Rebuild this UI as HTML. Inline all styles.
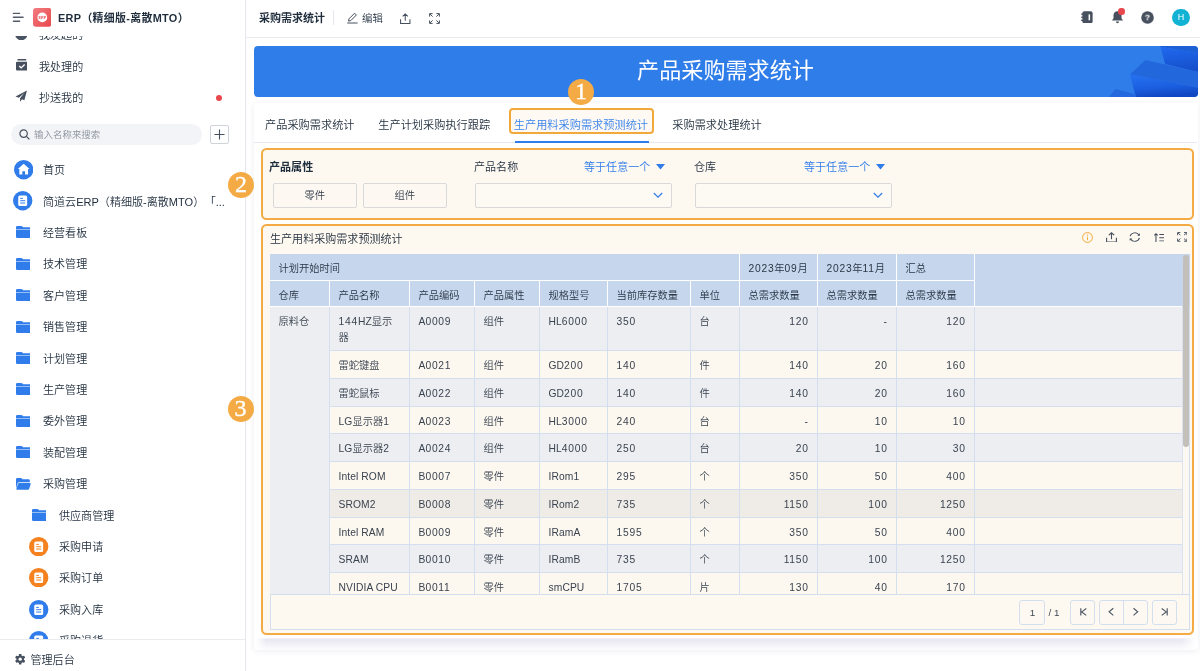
<!DOCTYPE html>
<html lang="zh-CN">
<head>
<meta charset="utf-8">
<title>采购需求统计</title>
<style>
*{box-sizing:border-box;margin:0;padding:0}
html,body{width:1200px;height:671px;overflow:hidden;background:#fff}
body{font-family:"Liberation Sans","Noto Sans CJK SC",sans-serif;color:#1f2d3d;font-size:12px;position:relative;font-weight:350}
.abs{position:absolute}
#wrap{position:absolute;left:0;top:0;width:1200px;height:671px;will-change:transform}
#side{position:absolute;left:0;top:0;width:246px;height:671px;background:#fff;border-right:1px solid #e4e7ed;overflow:hidden}
#side .hd{position:absolute;left:0;top:0;width:244px;height:36px;background:#fff;z-index:3}
#side .ttl{position:absolute;left:58px;top:8px;letter-spacing:.33px;font-size:10.9px;font-weight:700;line-height:20px;color:#1f2d3d;white-space:nowrap}
.it{position:absolute;left:0;width:244px;height:24px;line-height:24px;font-size:11.06px;color:#1f2d3d;white-space:nowrap}
.it span{position:absolute;left:43px;top:0}
.it.sub span{left:59px}
.it svg{position:absolute}
#side .ft{position:absolute;left:0;top:639px;width:245px;height:32px;background:#fff;border-top:1px solid #e9ebef;z-index:3}
#top{position:absolute;left:246px;top:0;width:954px;height:38px;background:#fff;border-bottom:1px solid #e9ebef}
#banner{position:absolute;left:254px;top:45.5px;width:944px;height:51.2px;background:#2f7de9;border-radius:4px;overflow:hidden}
#banner .t{position:absolute;left:0;top:0;width:943px;text-align:center;color:#fff;font-weight:400;font-size:22.1px;line-height:49px;letter-spacing:0}
#panel{position:absolute;left:254px;top:103px;width:944px;height:547px;background:#fff;box-shadow:0 1px 6px rgba(70,70,130,.09);border-radius:3px}
#tabs{position:absolute;left:254px;top:103px;width:943px;height:40px;border-bottom:1px solid #e6e9ef}
.tab{position:absolute;top:0;height:40px;line-height:44px;font-size:11.2px;color:#1f2d3d;white-space:nowrap}
.obox{position:absolute;border:2.900px solid #f4ab43;border-radius:5.500px;background:#fdf8f0}
.badge{position:absolute;width:26px;height:26px;border-radius:50%;background:#f4ab46;color:#fff;font-family:"Liberation Serif",serif;font-weight:400;font-size:24px;line-height:25px;text-align:center;-webkit-text-stroke:.35px #fff}
#tbl{position:absolute;left:270px;top:254px;width:912px;height:340px;overflow:hidden;background:#fdf9f1}
.c{position:absolute;font-size:10.27px;color:#3a4350;border-right:1px solid #d3deee;border-bottom:1px solid #d3deee;padding:0 0 0 8.500px;white-space:nowrap;overflow:hidden}
.h{background:#c6d6ec;border-right:1px solid #fff;border-bottom:1px solid #fff;color:#2a3646}
.n{text-align:right;padding:0 9px 0 0}
.c i{font-style:normal;letter-spacing:.75px}
.c em{font-style:normal;letter-spacing:.1px}
.n i{margin-right:-.75px}
.lbl{position:absolute;font-size:11.06px;line-height:16px;white-space:nowrap}
.btn{position:absolute;height:25px;border:1px solid #d9d9da;border-radius:2px;background:#fdf9f2;text-align:center;line-height:23px;font-size:10.3px;color:#333d4a}
.sel{position:absolute;height:25px;border:1px solid #d9d9da;border-radius:2px;background:#fdf9f3}
.pg{position:absolute;height:25px;border:1px solid #d3deee;border-radius:3px;background:#fdf9f2;top:599.5px}
</style>
</head>
<body>
<div id="wrap">
<div id="side">
<svg class="abs" style="left:15.300px;top:27.600px" width="12.600" height="12.600" viewBox="0 0 13 13"><circle cx="6.500" cy="6.500" r="6.300" fill="#4a5361"/></svg>
<div class="it" style="top:23.400px"><span style="left:39px">我发起的</span></div>
<div class="hd"></div>
<svg class="abs" style="left:12px;top:12px;z-index:4" width="13" height="11" viewBox="0 0 13 11"><path d="M1.400 1.400h6.200M1.400 5.200h9.700M1.400 9.200h6.200" stroke="#535c6a" stroke-width="1.400" stroke-linecap="round" fill="none"/></svg>
<svg class="abs" style="left:32.500px;top:8.300px;z-index:4" width="18.600" height="18.800" viewBox="0 0 19 19"><defs><linearGradient id="lg" x1="0" y1="0" x2="1" y2="1"><stop offset="0" stop-color="#f27c80"/><stop offset="1" stop-color="#e9474c"/></linearGradient></defs><rect width="19" height="19" rx="3" fill="url(#lg)"/><circle cx="9.500" cy="9.500" r="5" fill="#fff"/><text x="9.500" y="10.900" text-anchor="middle" font-family="Liberation Sans,sans-serif" font-weight="700" font-size="3.800" fill="#ec5257">ERP</text></svg>
<div class="ttl" style="z-index:4">ERP（精细版-离散MTO）</div>
<svg class="abs" style="left:15.600px;top:59.300px" width="11.800" height="12" viewBox="0 0 13 13"><rect x="1.6" y="0" width="9.8" height="1.5" rx=".6" fill="#47505e"/><path d="M1.2 2.8h10.6q1.2 0 1.2 1.2v7.4q0 1.2-1.2 1.2H1.2Q0 12.6 0 11.400V4q0-1.200 1.200-1.200z" fill="#47505e"/><path d="M3.6 7.6l2.100 2.100 3.800-3.800" stroke="#fff" stroke-width="1.5" fill="none"/></svg>
<div class="it" style="top:55px"><span style="left:39px">我处理的</span></div>
<svg class="abs" style="left:15.300px;top:90px" width="12.400" height="12.600" viewBox="0 0 14 14"><path d="M13.500.4L.6 7.200l3.700 1.400 6.200-5.400-4.800 6.100v3.900l2.300-2.800 2.600 1z" fill="#47505e"/></svg>
<div class="it" style="top:86.200px"><span style="left:39px">抄送我的</span></div>
<div class="abs" style="left:216px;top:95px;width:6px;height:6px;border-radius:50%;background:#e8474d"></div>
<div class="abs" style="left:11px;top:124px;width:191px;height:21px;border-radius:11px;background:#f3f4f7"></div>
<svg class="abs" style="left:19px;top:129px" width="11" height="11" viewBox="0 0 11 11"><circle cx="4.600" cy="4.600" r="3.700" stroke="#47505e" stroke-width="1.200" fill="none"/><path d="M7.400 7.400l3 3" stroke="#47505e" stroke-width="1.300"/></svg>
<div class="abs" style="left:34px;top:125px;font-size:9.48px;line-height:20px;color:#8a919c;white-space:nowrap">输入名称来搜索</div>
<div class="abs" style="left:210px;top:125px;width:19px;height:19px;border:1px solid #cfd3da;border-radius:2px;background:#fff"></div>
<svg class="abs" style="left:214px;top:129px" width="11" height="11" viewBox="0 0 11 11"><path d="M5.500.5v10M.5 5.500h10" stroke="#47505e" stroke-width="1.100"/></svg>
<svg class="abs" style="left:13.500px;top:160.300px" width="19.400" height="19.400" viewBox="0 0 20 20"><circle cx="10" cy="10" r="10" fill="#2f7cea"/><path d="M10 3.800l6 5.400h-1.500v5.800h-3.100v-3.400h-2.800v3.400H5.500V9.200H4z" fill="#fff"/></svg>
<div class="it" style="top:158px"><span>首页</span></div>
<svg class="abs" style="left:13.3px;top:191.3px" width="19.4" height="19.4" viewBox="0 0 20 20"><circle cx="10" cy="10" r="10" fill="#2f7cea"/><rect x="5.400" y="4.600" width="9.200" height="10.800" rx="1.600" fill="#fff"/><rect x="7.400" y="7.100" width="2.800" height="1" fill="#2f7cea"/><rect x="7.400" y="9.500" width="5.200" height="1" fill="#2f7cea"/><rect x="7.400" y="11.900" width="5.200" height="1" fill="#2f7cea"/></svg>
<div class="it" style="top:189.700px"><span>简道云ERP（精细版-离散MTO）<b style="font-weight:400;margin-left:6px">「...</b></span></div>
<svg class="abs" style="left:15.7px;top:226.4px" width="14.8" height="12" viewBox="0 0 14.8 12"><path d="M0 1.300Q0 0 1.300 0h4q.7 0 1.100.5l.7.800h6.400q1.300 0 1.300 1.300v.9H0z" fill="#2f7cea"/><path d="M0 4.100h14.800v6.600q0 1.300-1.300 1.300H1.300Q0 12 0 10.700z" fill="#2f7cea"/></svg>
<div class="it" style="top:221.0px"><span>经营看板</span></div>
<svg class="abs" style="left:15.7px;top:257.8px" width="14.8" height="12" viewBox="0 0 14.8 12"><path d="M0 1.300Q0 0 1.300 0h4q.7 0 1.100.5l.7.800h6.400q1.300 0 1.300 1.300v.9H0z" fill="#2f7cea"/><path d="M0 4.100h14.800v6.600q0 1.300-1.300 1.300H1.300Q0 12 0 10.700z" fill="#2f7cea"/></svg>
<div class="it" style="top:252.4px"><span>技术管理</span></div>
<svg class="abs" style="left:15.7px;top:289.2px" width="14.8" height="12" viewBox="0 0 14.8 12"><path d="M0 1.300Q0 0 1.300 0h4q.7 0 1.100.5l.7.800h6.400q1.300 0 1.300 1.300v.9H0z" fill="#2f7cea"/><path d="M0 4.100h14.800v6.600q0 1.300-1.300 1.300H1.300Q0 12 0 10.700z" fill="#2f7cea"/></svg>
<div class="it" style="top:283.8px"><span>客户管理</span></div>
<svg class="abs" style="left:15.7px;top:320.6px" width="14.8" height="12" viewBox="0 0 14.8 12"><path d="M0 1.300Q0 0 1.300 0h4q.7 0 1.100.5l.7.800h6.400q1.300 0 1.300 1.300v.9H0z" fill="#2f7cea"/><path d="M0 4.100h14.800v6.600q0 1.300-1.300 1.300H1.300Q0 12 0 10.700z" fill="#2f7cea"/></svg>
<div class="it" style="top:315.2px"><span>销售管理</span></div>
<svg class="abs" style="left:15.7px;top:352.0px" width="14.8" height="12" viewBox="0 0 14.8 12"><path d="M0 1.300Q0 0 1.300 0h4q.7 0 1.100.5l.7.800h6.400q1.300 0 1.300 1.300v.9H0z" fill="#2f7cea"/><path d="M0 4.100h14.800v6.600q0 1.300-1.300 1.300H1.300Q0 12 0 10.700z" fill="#2f7cea"/></svg>
<div class="it" style="top:346.6px"><span>计划管理</span></div>
<svg class="abs" style="left:15.7px;top:383.4px" width="14.8" height="12" viewBox="0 0 14.8 12"><path d="M0 1.300Q0 0 1.300 0h4q.7 0 1.100.5l.7.800h6.400q1.300 0 1.300 1.300v.9H0z" fill="#2f7cea"/><path d="M0 4.100h14.800v6.600q0 1.300-1.300 1.300H1.300Q0 12 0 10.700z" fill="#2f7cea"/></svg>
<div class="it" style="top:378.0px"><span>生产管理</span></div>
<svg class="abs" style="left:15.7px;top:414.8px" width="14.8" height="12" viewBox="0 0 14.8 12"><path d="M0 1.300Q0 0 1.300 0h4q.7 0 1.100.5l.7.800h6.400q1.300 0 1.300 1.300v.9H0z" fill="#2f7cea"/><path d="M0 4.100h14.800v6.600q0 1.300-1.300 1.300H1.300Q0 12 0 10.700z" fill="#2f7cea"/></svg>
<div class="it" style="top:409.4px"><span>委外管理</span></div>
<svg class="abs" style="left:15.7px;top:446.2px" width="14.8" height="12" viewBox="0 0 14.8 12"><path d="M0 1.300Q0 0 1.300 0h4q.7 0 1.100.5l.7.800h6.400q1.300 0 1.300 1.300v.9H0z" fill="#2f7cea"/><path d="M0 4.100h14.800v6.600q0 1.300-1.300 1.300H1.300Q0 12 0 10.700z" fill="#2f7cea"/></svg>
<div class="it" style="top:440.8px"><span>装配管理</span></div>
<svg class="abs" style="left:15.8px;top:477.8px" width="14.900" height="11.800" viewBox="0 0 14.900 11.800"><path d="M0 1.300Q0 0 1.300 0h3.600q.6 0 1 .5l.7.800h6q1.200 0 1.200 1.200v1.700H3q-1 0-1.300 1L0 10.200z" fill="#2f7cea"/><path d="M3.300 4.900h10.700q1 0 .7 1l-1.500 4.900q-.3 1-1.300 1H1.100q-1 0-.7-1l1.600-4.900q.3-1 1.300-1z" fill="#2f7cea"/></svg>
<div class="it" style="top:472.2px"><span>采购管理</span></div>
<svg class="abs" style="left:31.7px;top:509px" width="14.8" height="12" viewBox="0 0 14.8 12"><path d="M0 1.300Q0 0 1.300 0h4q.7 0 1.100.5l.7.800h6.400q1.300 0 1.300 1.300v.9H0z" fill="#2f7cea"/><path d="M0 4.100h14.800v6.600q0 1.300-1.300 1.300H1.300Q0 12 0 10.700z" fill="#2f7cea"/></svg>
<div class="it sub" style="top:503.6px"><span>供应商管理</span></div>
<svg class="abs" style="left:29.3px;top:536.6999999999999px" width="19.4" height="19.4" viewBox="0 0 20 20"><circle cx="10" cy="10" r="10" fill="#f5821f"/><rect x="5.400" y="4.600" width="9.200" height="10.800" rx="1.600" fill="#fff"/><rect x="7.400" y="7.100" width="2.800" height="1" fill="#f5821f"/><rect x="7.400" y="9.500" width="5.200" height="1" fill="#f5821f"/><rect x="7.400" y="11.900" width="5.200" height="1" fill="#f5821f"/></svg>
<div class="it sub" style="top:535.0px"><span>采购申请</span></div>
<svg class="abs" style="left:29.3px;top:568.0999999999999px" width="19.4" height="19.4" viewBox="0 0 20 20"><circle cx="10" cy="10" r="10" fill="#f5821f"/><rect x="5.400" y="4.600" width="9.200" height="10.800" rx="1.600" fill="#fff"/><rect x="7.400" y="7.100" width="2.800" height="1" fill="#f5821f"/><rect x="7.400" y="9.500" width="5.200" height="1" fill="#f5821f"/><rect x="7.400" y="11.900" width="5.200" height="1" fill="#f5821f"/></svg>
<div class="it sub" style="top:566.4px"><span>采购订单</span></div>
<svg class="abs" style="left:29.3px;top:599.5px" width="19.4" height="19.4" viewBox="0 0 20 20"><circle cx="10" cy="10" r="10" fill="#2f7cea"/><rect x="5.400" y="4.600" width="9.200" height="10.800" rx="1.600" fill="#fff"/><rect x="7.400" y="7.100" width="2.800" height="1" fill="#2f7cea"/><rect x="7.400" y="9.500" width="5.200" height="1" fill="#2f7cea"/><rect x="7.400" y="11.900" width="5.200" height="1" fill="#2f7cea"/></svg>
<div class="it sub" style="top:597.8px"><span>采购入库</span></div>
<svg class="abs" style="left:29.3px;top:630.9px" width="19.4" height="19.4" viewBox="0 0 20 20"><circle cx="10" cy="10" r="10" fill="#2f7cea"/><rect x="5.400" y="4.600" width="9.200" height="10.800" rx="1.600" fill="#fff"/><rect x="7.400" y="7.100" width="2.800" height="1" fill="#2f7cea"/><rect x="7.400" y="9.500" width="5.200" height="1" fill="#2f7cea"/><rect x="7.400" y="11.900" width="5.200" height="1" fill="#2f7cea"/></svg>
<div class="it sub" style="top:629.2px"><span>采购退货</span></div>
<div class="ft"></div>
<svg class="abs" style="left:15px;top:654.300px;z-index:4" width="10.400" height="10.400" viewBox="-6 -6 12 12"><g fill="#47505e"><circle r="4.300"/><rect x="-1.500" y="-6" width="3" height="12" rx=".6"/><rect x="-1.500" y="-6" width="3" height="12" rx=".6" transform="rotate(60)"/><rect x="-1.500" y="-6" width="3" height="12" rx=".6" transform="rotate(120)"/></g><circle r="1.900" fill="#fff"/></svg>
<div class="abs" style="left:30.500px;top:649px;font-size:11.06px;line-height:22px;z-index:4;color:#1f2d3d;white-space:nowrap">管理后台</div>
</div>
<div id="top">
<div class="abs" style="left:13px;top:8px;font-size:11px;font-weight:700;line-height:20px;white-space:nowrap;color:#1f2d3d">采购需求统计</div>
<div class="abs" style="left:86.5px;top:10px;width:1px;height:15px;background:#e4e7ed"></div>
<svg class="abs" style="left:101px;top:12px" width="11" height="12" viewBox="0 0 11 12"><path d="M7.600 1.200l1.800 1.800-5.600 5.600-2.300.5.500-2.300z" stroke="#47505e" stroke-width="1" fill="none" stroke-linejoin="round"/><path d="M.2 11h10.400" stroke="#47505e" stroke-width="1"/></svg>
<div class="abs" style="left:116px;top:8.5px;font-size:10.4px;line-height:20px;white-space:nowrap;color:#1f2d3d">编辑</div>
<svg class="abs" style="left:154px;top:12.5px" width="10.5" height="11.5" viewBox="0 0 11 12"><path d="M5.500 8V1M2.800 3.500L5.500.9l2.700 2.600M.6 6.500V11h9.800V6.500" stroke="#47505e" stroke-width="1.100" fill="none"/></svg>
<svg class="abs" style="left:183px;top:13px" width="11" height="11" viewBox="0 0 11 11"><path d="M.6 3.600V.6h3M7.400.6h3v3M10.400 7.400v3h-3M3.600 10.400h-3v-3M1 1l2.600 2.600M10 1L7.400 3.600M10 10L7.400 7.400M1 10l2.600-2.600" stroke="#47505e" stroke-width="1" fill="none"/></svg>
<svg class="abs" style="left:834.600px;top:10.600px" width="12" height="12.600" viewBox="0 0 12 13"><rect x="1.200" y=".3" width="10.600" height="12.400" rx="2" fill="#47505e"/><rect x="0" y="2.600" width="2.400" height="1.300" fill="#47505e"/><rect x="0" y="5.800" width="2.400" height="1.300" fill="#47505e"/><rect x="0" y="9" width="2.400" height="1.300" fill="#47505e"/><rect x="7.600" y="3.400" width="1.600" height="6.200" rx=".4" fill="#fff"/></svg>
<svg class="abs" style="left:865px;top:9.500px" width="13" height="14" viewBox="0 0 13 14"><path d="M6.500 1.200c2.600 0 4 1.900 4 4.300v2.800l1.500 2.200H1l1.500-2.200V5.500c0-2.400 1.400-4.300 4-4.300z" fill="#47505e"/><path d="M5 11.600h3c0 1-.7 1.700-1.500 1.700S5 12.600 5 11.600z" fill="#47505e"/></svg>
<div class="abs" style="left:872.400px;top:8.200px;width:6.500px;height:6.500px;border-radius:50%;background:#e8474d"></div>
<svg class="abs" style="left:895.200px;top:10.500px" width="13" height="13" viewBox="0 0 14 14"><circle cx="7" cy="7" r="6.800" fill="#47505e"/><text x="7" y="10.400" text-anchor="middle" font-family="Liberation Sans,sans-serif" font-weight="700" font-size="9.500" fill="#fff">?</text></svg>
<div class="abs" style="left:926.300px;top:8.600px;width:17.400px;height:17.400px;border-radius:50%;background:#11b2d3;color:#fff;font-size:9px;line-height:17.400px;text-align:center">H</div>
</div>
<div id="banner"><div class="t">产品采购需求统计</div><svg class="abs" style="left:826px;top:-5.5px" width="120" height="64" viewBox="0 0 1200 640"><defs><linearGradient id="b1" x1="0" y1="0" x2="0.15" y2="1"><stop offset="0" stop-color="#2069ee"/><stop offset="1" stop-color="#154fcb"/></linearGradient><linearGradient id="b2" x1="0" y1="0" x2="0.25" y2="1"><stop offset="0" stop-color="#2672f2"/><stop offset=".6" stop-color="#1b5fe0"/><stop offset="1" stop-color="#1047c2"/></linearGradient></defs><polygon points="805,55 1200,55 1200,135 805,68" fill="#1d5fd4"/><polygon points="805,68 1200,135 1200,325 852,240" fill="url(#b1)"/><polygon points="655,200 1200,325 1200,480 500,345" fill="#2367dc"/><polygon points="500,345 1200,480 1200,580 560,580" fill="url(#b2)"/><polygon points="355,490 560,545 560,580 280,580" fill="#2569de"/></svg></div>
<div id="panel"></div>
<div class="abs" style="left:509px;top:108px;width:145px;height:26px;border:2px solid #f2a93b;border-radius:4px;background:#fef9f3"></div>
<div id="tabs"><div class="tab" style="left:11px;color:#1f2d3d">产品采购需求统计</div><div class="tab" style="left:124.3px;color:#1f2d3d">生产计划采购执行跟踪</div><div class="tab" style="left:259.8px;color:#3a83ec">生产用料采购需求预测统计</div><div class="tab" style="left:418.3px;color:#1f2d3d">采购需求处理统计</div><div class="abs" style="left:260.700px;top:37.500px;width:134.300px;height:2px;background:#2f7cea"></div></div>
<div class="badge" style="left:568px;top:79px">1</div>
<div class="obox" style="left:261px;top:148px;width:933px;height:72px"></div>
<div class="badge" style="left:228px;top:171.500px">2</div>
<div class="lbl" style="left:269px;top:159px;font-weight:700">产品属性</div>
<div class="btn" style="left:273px;top:182.500px;width:83.500px">零件</div>
<div class="btn" style="left:363px;top:182.500px;width:83.500px">组件</div>
<div class="lbl" style="left:474px;top:159px">产品名称</div>
<div class="lbl" style="left:584px;top:159px;color:#2f7cea">等于任意一个</div>
<svg class="abs" style="left:656px;top:164px" width="9" height="6" viewBox="0 0 9 6"><path d="M0 0h9L4.500 5.600z" fill="#2f7cea"/></svg>
<div class="sel" style="left:474.500px;top:183px;width:197px"></div>
<svg class="abs" style="left:653px;top:192px" width="10" height="7" viewBox="0 0 10 7"><path d="M.8 1l4.200 4.200L9.200 1" stroke="#2f7cea" stroke-width="1.200" fill="none"/></svg>
<div class="lbl" style="left:694px;top:159px">仓库</div>
<div class="lbl" style="left:804px;top:159px;color:#2f7cea">等于任意一个</div>
<svg class="abs" style="left:876px;top:164px" width="9" height="6" viewBox="0 0 9 6"><path d="M0 0h9L4.500 5.600z" fill="#2f7cea"/></svg>
<div class="sel" style="left:694.500px;top:183px;width:197px"></div>
<svg class="abs" style="left:873px;top:192px" width="10" height="7" viewBox="0 0 10 7"><path d="M.8 1l4.200 4.200L9.200 1" stroke="#2f7cea" stroke-width="1.200" fill="none"/></svg>
<div class="abs" style="left:256px;top:637.500px;width:940px;height:13px;background:linear-gradient(to bottom,rgba(105,95,170,.17),rgba(105,95,170,.05) 70%,rgba(105,95,170,0));filter:blur(1.200px);-webkit-mask-image:linear-gradient(to right,transparent,#000 10px,#000 926px,transparent)"></div>
<div class="obox" style="left:261px;top:224px;width:933.200px;height:411px"></div>
<div class="badge" style="left:227.500px;top:396px">3</div>
<div class="lbl" style="left:270px;top:231px;font-size:11.06px">生产用料采购需求预测统计</div>
<svg class="abs" style="left:1082px;top:232px" width="11" height="11" viewBox="0 0 11 11"><circle cx="5.500" cy="5.500" r="4.900" stroke="#f2a93b" stroke-width="1" fill="none"/><path d="M5.500 4.800v3.400" stroke="#f2a93b" stroke-width="1"/><circle cx="5.500" cy="3.200" r=".65" fill="#f2a93b"/></svg>
<svg class="abs" style="left:1106px;top:231.700px" width="11" height="10.800" viewBox="0 0 11 12" preserveAspectRatio="none"><path d="M5.500 8V1M2.800 3.500L5.500.9l2.700 2.600M.6 6.500V11h9.800V6.500" stroke="#47505e" stroke-width="1.100" fill="none"/></svg>
<svg class="abs" style="left:1129.200px;top:232px" width="11.600" height="10.200" viewBox="0 0 12 12" preserveAspectRatio="none"><path d="M1.200 5A4.900 4.900 0 0 1 10.400 3.700M10.800 7A4.900 4.900 0 0 1 1.600 8.300" stroke="#47505e" stroke-width="1.100" fill="none"/><path d="M11.300 1.600v2.800H8.500zM.7 10.400V7.600h2.800z" fill="#47505e"/></svg>
<svg class="abs" style="left:1153.500px;top:232.600px" width="10.800" height="9.400" viewBox="0 0 11 11" preserveAspectRatio="none"><path d="M2 10.500V.8M.2 2.800L2 .8l1.800 2M5.400 1.800h5.400M5.400 5.500h5.400M5.400 9.200h5.400" stroke="#47505e" stroke-width="1.100" fill="none"/></svg>
<svg class="abs" style="left:1176.800px;top:232.200px" width="10.400" height="9.800" viewBox="0 0 11 11" preserveAspectRatio="none"><path d="M.6 3.600V.6h3M7.400.6h3v3M10.400 7.400v3h-3M3.600 10.400h-3v-3M1 1l2.600 2.600M10 1L7.400 3.600M10 10L7.400 7.400M1 10l2.600-2.600" stroke="#47505e" stroke-width="1" fill="none"/></svg>
<div id="tbl"><div class="c h" style="left:0px;top:0px;width:470px;height:27px;line-height:30px">计划开始时间</div><div class="c h" style="left:470px;top:0px;width:78px;height:27px;line-height:30px"><i>2023</i>年<i>09</i>月</div><div class="c h" style="left:548px;top:0px;width:79px;height:27px;line-height:30px"><i>2023</i>年<i>11</i>月</div><div class="c h" style="left:627px;top:0px;width:78px;height:27px;line-height:30px">汇总</div><div class="c h" style="left:705px;top:0px;width:207px;height:53px;border-right:none"></div><div class="c h" style="left:0px;top:27px;width:60px;height:26px;line-height:29px">仓库</div><div class="c h" style="left:60px;top:27px;width:80px;height:26px;line-height:29px">产品名称</div><div class="c h" style="left:140px;top:27px;width:65px;height:26px;line-height:29px">产品编码</div><div class="c h" style="left:205px;top:27px;width:65px;height:26px;line-height:29px">产品属性</div><div class="c h" style="left:270px;top:27px;width:68px;height:26px;line-height:29px">规格型号</div><div class="c h" style="left:338px;top:27px;width:83px;height:26px;line-height:29px">当前库存数量</div><div class="c h" style="left:421px;top:27px;width:49px;height:26px;line-height:29px">单位</div><div class="c h" style="left:470px;top:27px;width:78px;height:26px;line-height:29px">总需求数量</div><div class="c h" style="left:548px;top:27px;width:79px;height:26px;line-height:29px">总需求数量</div><div class="c h" style="left:627px;top:27px;width:78px;height:26px;line-height:29px">总需求数量</div><div class="c " style="left:0px;top:53px;width:60px;height:347px;background:#eceef1;line-height:16px;padding-top:7px">原料仓</div><div class="c " style="left:60px;top:53px;width:80px;height:44px;background:#eceef1;line-height:16px;padding-top:7px"><i>144</i><em>HZ</em>显示<br>器</div><div class="c " style="left:140px;top:53px;width:65px;height:44px;background:#eceef1;line-height:16px;padding-top:7px"><em>A</em><i>0009</i></div><div class="c " style="left:205px;top:53px;width:65px;height:44px;background:#eceef1;line-height:16px;padding-top:7px">组件</div><div class="c " style="left:270px;top:53px;width:68px;height:44px;background:#eceef1;line-height:16px;padding-top:7px"><em>HL</em><i>6000</i></div><div class="c " style="left:338px;top:53px;width:83px;height:44px;background:#eceef1;line-height:16px;padding-top:7px"><i>350</i></div><div class="c " style="left:421px;top:53px;width:49px;height:44px;background:#eceef1;line-height:16px;padding-top:7px">台</div><div class="c n" style="left:470px;top:53px;width:78px;height:44px;background:#eceef1;line-height:16px;padding-top:7px"><i>120</i></div><div class="c n" style="left:548px;top:53px;width:79px;height:44px;background:#eceef1;line-height:16px;padding-top:7px"><i>-</i></div><div class="c n" style="left:627px;top:53px;width:78px;height:44px;background:#eceef1;line-height:16px;padding-top:7px"><i>120</i></div><div class="c " style="left:705px;top:53px;width:207px;height:44px;background:#eceef1;border-right:none"></div><div class="c " style="left:60px;top:97px;width:80px;height:28px;background:#fcf8f0;padding-top:1px;line-height:28px">雷蛇键盘</div><div class="c " style="left:140px;top:97px;width:65px;height:28px;background:#fcf8f0;padding-top:1px;line-height:28px"><em>A</em><i>0021</i></div><div class="c " style="left:205px;top:97px;width:65px;height:28px;background:#fcf8f0;padding-top:1px;line-height:28px">组件</div><div class="c " style="left:270px;top:97px;width:68px;height:28px;background:#fcf8f0;padding-top:1px;line-height:28px"><em>GD</em><i>200</i></div><div class="c " style="left:338px;top:97px;width:83px;height:28px;background:#fcf8f0;padding-top:1px;line-height:28px"><i>140</i></div><div class="c " style="left:421px;top:97px;width:49px;height:28px;background:#fcf8f0;padding-top:1px;line-height:28px">件</div><div class="c n" style="left:470px;top:97px;width:78px;height:28px;background:#fcf8f0;padding-top:1px;line-height:28px"><i>140</i></div><div class="c n" style="left:548px;top:97px;width:79px;height:28px;background:#fcf8f0;padding-top:1px;line-height:28px"><i>20</i></div><div class="c n" style="left:627px;top:97px;width:78px;height:28px;background:#fcf8f0;padding-top:1px;line-height:28px"><i>160</i></div><div class="c " style="left:705px;top:97px;width:207px;height:28px;background:#fcf8f0;border-right:none"></div><div class="c " style="left:60px;top:125px;width:80px;height:28px;background:#eceef1;padding-top:1px;line-height:28px">雷蛇鼠标</div><div class="c " style="left:140px;top:125px;width:65px;height:28px;background:#eceef1;padding-top:1px;line-height:28px"><em>A</em><i>0022</i></div><div class="c " style="left:205px;top:125px;width:65px;height:28px;background:#eceef1;padding-top:1px;line-height:28px">组件</div><div class="c " style="left:270px;top:125px;width:68px;height:28px;background:#eceef1;padding-top:1px;line-height:28px"><em>GD</em><i>200</i></div><div class="c " style="left:338px;top:125px;width:83px;height:28px;background:#eceef1;padding-top:1px;line-height:28px"><i>140</i></div><div class="c " style="left:421px;top:125px;width:49px;height:28px;background:#eceef1;padding-top:1px;line-height:28px">件</div><div class="c n" style="left:470px;top:125px;width:78px;height:28px;background:#eceef1;padding-top:1px;line-height:28px"><i>140</i></div><div class="c n" style="left:548px;top:125px;width:79px;height:28px;background:#eceef1;padding-top:1px;line-height:28px"><i>20</i></div><div class="c n" style="left:627px;top:125px;width:78px;height:28px;background:#eceef1;padding-top:1px;line-height:28px"><i>160</i></div><div class="c " style="left:705px;top:125px;width:207px;height:28px;background:#eceef1;border-right:none"></div><div class="c " style="left:60px;top:153px;width:80px;height:27px;background:#fcf8f0;padding-top:1px;line-height:27px"><em>LG</em>显示器<i>1</i></div><div class="c " style="left:140px;top:153px;width:65px;height:27px;background:#fcf8f0;padding-top:1px;line-height:27px"><em>A</em><i>0023</i></div><div class="c " style="left:205px;top:153px;width:65px;height:27px;background:#fcf8f0;padding-top:1px;line-height:27px">组件</div><div class="c " style="left:270px;top:153px;width:68px;height:27px;background:#fcf8f0;padding-top:1px;line-height:27px"><em>HL</em><i>3000</i></div><div class="c " style="left:338px;top:153px;width:83px;height:27px;background:#fcf8f0;padding-top:1px;line-height:27px"><i>240</i></div><div class="c " style="left:421px;top:153px;width:49px;height:27px;background:#fcf8f0;padding-top:1px;line-height:27px">台</div><div class="c n" style="left:470px;top:153px;width:78px;height:27px;background:#fcf8f0;padding-top:1px;line-height:27px"><i>-</i></div><div class="c n" style="left:548px;top:153px;width:79px;height:27px;background:#fcf8f0;padding-top:1px;line-height:27px"><i>10</i></div><div class="c n" style="left:627px;top:153px;width:78px;height:27px;background:#fcf8f0;padding-top:1px;line-height:27px"><i>10</i></div><div class="c " style="left:705px;top:153px;width:207px;height:27px;background:#fcf8f0;border-right:none"></div><div class="c " style="left:60px;top:180px;width:80px;height:28px;background:#eceef1;padding-top:1px;line-height:28px"><em>LG</em>显示器<i>2</i></div><div class="c " style="left:140px;top:180px;width:65px;height:28px;background:#eceef1;padding-top:1px;line-height:28px"><em>A</em><i>0024</i></div><div class="c " style="left:205px;top:180px;width:65px;height:28px;background:#eceef1;padding-top:1px;line-height:28px">组件</div><div class="c " style="left:270px;top:180px;width:68px;height:28px;background:#eceef1;padding-top:1px;line-height:28px"><em>HL</em><i>4000</i></div><div class="c " style="left:338px;top:180px;width:83px;height:28px;background:#eceef1;padding-top:1px;line-height:28px"><i>250</i></div><div class="c " style="left:421px;top:180px;width:49px;height:28px;background:#eceef1;padding-top:1px;line-height:28px">台</div><div class="c n" style="left:470px;top:180px;width:78px;height:28px;background:#eceef1;padding-top:1px;line-height:28px"><i>20</i></div><div class="c n" style="left:548px;top:180px;width:79px;height:28px;background:#eceef1;padding-top:1px;line-height:28px"><i>10</i></div><div class="c n" style="left:627px;top:180px;width:78px;height:28px;background:#eceef1;padding-top:1px;line-height:28px"><i>30</i></div><div class="c " style="left:705px;top:180px;width:207px;height:28px;background:#eceef1;border-right:none"></div><div class="c " style="left:60px;top:208px;width:80px;height:28px;background:#fcf8f0;padding-top:1px;line-height:28px"><em>Intel ROM</em></div><div class="c " style="left:140px;top:208px;width:65px;height:28px;background:#fcf8f0;padding-top:1px;line-height:28px"><em>B</em><i>0007</i></div><div class="c " style="left:205px;top:208px;width:65px;height:28px;background:#fcf8f0;padding-top:1px;line-height:28px">零件</div><div class="c " style="left:270px;top:208px;width:68px;height:28px;background:#fcf8f0;padding-top:1px;line-height:28px"><em>IRom</em><i>1</i></div><div class="c " style="left:338px;top:208px;width:83px;height:28px;background:#fcf8f0;padding-top:1px;line-height:28px"><i>295</i></div><div class="c " style="left:421px;top:208px;width:49px;height:28px;background:#fcf8f0;padding-top:1px;line-height:28px">个</div><div class="c n" style="left:470px;top:208px;width:78px;height:28px;background:#fcf8f0;padding-top:1px;line-height:28px"><i>350</i></div><div class="c n" style="left:548px;top:208px;width:79px;height:28px;background:#fcf8f0;padding-top:1px;line-height:28px"><i>50</i></div><div class="c n" style="left:627px;top:208px;width:78px;height:28px;background:#fcf8f0;padding-top:1px;line-height:28px"><i>400</i></div><div class="c " style="left:705px;top:208px;width:207px;height:28px;background:#fcf8f0;border-right:none"></div><div class="c " style="left:60px;top:236px;width:80px;height:28px;background:#efece7;padding-top:1px;line-height:28px"><em>SROM</em><i>2</i></div><div class="c " style="left:140px;top:236px;width:65px;height:28px;background:#efece7;padding-top:1px;line-height:28px"><em>B</em><i>0008</i></div><div class="c " style="left:205px;top:236px;width:65px;height:28px;background:#efece7;padding-top:1px;line-height:28px">零件</div><div class="c " style="left:270px;top:236px;width:68px;height:28px;background:#efece7;padding-top:1px;line-height:28px"><em>IRom</em><i>2</i></div><div class="c " style="left:338px;top:236px;width:83px;height:28px;background:#efece7;padding-top:1px;line-height:28px"><i>735</i></div><div class="c " style="left:421px;top:236px;width:49px;height:28px;background:#efece7;padding-top:1px;line-height:28px">个</div><div class="c n" style="left:470px;top:236px;width:78px;height:28px;background:#efece7;padding-top:1px;line-height:28px"><i>1150</i></div><div class="c n" style="left:548px;top:236px;width:79px;height:28px;background:#efece7;padding-top:1px;line-height:28px"><i>100</i></div><div class="c n" style="left:627px;top:236px;width:78px;height:28px;background:#efece7;padding-top:1px;line-height:28px"><i>1250</i></div><div class="c " style="left:705px;top:236px;width:207px;height:28px;background:#efece7;border-right:none"></div><div class="c " style="left:60px;top:264px;width:80px;height:27px;background:#fcf8f0;padding-top:1px;line-height:27px"><em>Intel RAM</em></div><div class="c " style="left:140px;top:264px;width:65px;height:27px;background:#fcf8f0;padding-top:1px;line-height:27px"><em>B</em><i>0009</i></div><div class="c " style="left:205px;top:264px;width:65px;height:27px;background:#fcf8f0;padding-top:1px;line-height:27px">零件</div><div class="c " style="left:270px;top:264px;width:68px;height:27px;background:#fcf8f0;padding-top:1px;line-height:27px"><em>IRamA</em></div><div class="c " style="left:338px;top:264px;width:83px;height:27px;background:#fcf8f0;padding-top:1px;line-height:27px"><i>1595</i></div><div class="c " style="left:421px;top:264px;width:49px;height:27px;background:#fcf8f0;padding-top:1px;line-height:27px">个</div><div class="c n" style="left:470px;top:264px;width:78px;height:27px;background:#fcf8f0;padding-top:1px;line-height:27px"><i>350</i></div><div class="c n" style="left:548px;top:264px;width:79px;height:27px;background:#fcf8f0;padding-top:1px;line-height:27px"><i>50</i></div><div class="c n" style="left:627px;top:264px;width:78px;height:27px;background:#fcf8f0;padding-top:1px;line-height:27px"><i>400</i></div><div class="c " style="left:705px;top:264px;width:207px;height:27px;background:#fcf8f0;border-right:none"></div><div class="c " style="left:60px;top:291px;width:80px;height:28px;background:#eceef1;padding-top:1px;line-height:28px"><em>SRAM</em></div><div class="c " style="left:140px;top:291px;width:65px;height:28px;background:#eceef1;padding-top:1px;line-height:28px"><em>B</em><i>0010</i></div><div class="c " style="left:205px;top:291px;width:65px;height:28px;background:#eceef1;padding-top:1px;line-height:28px">零件</div><div class="c " style="left:270px;top:291px;width:68px;height:28px;background:#eceef1;padding-top:1px;line-height:28px"><em>IRamB</em></div><div class="c " style="left:338px;top:291px;width:83px;height:28px;background:#eceef1;padding-top:1px;line-height:28px"><i>735</i></div><div class="c " style="left:421px;top:291px;width:49px;height:28px;background:#eceef1;padding-top:1px;line-height:28px">个</div><div class="c n" style="left:470px;top:291px;width:78px;height:28px;background:#eceef1;padding-top:1px;line-height:28px"><i>1150</i></div><div class="c n" style="left:548px;top:291px;width:79px;height:28px;background:#eceef1;padding-top:1px;line-height:28px"><i>100</i></div><div class="c n" style="left:627px;top:291px;width:78px;height:28px;background:#eceef1;padding-top:1px;line-height:28px"><i>1250</i></div><div class="c " style="left:705px;top:291px;width:207px;height:28px;background:#eceef1;border-right:none"></div><div class="c " style="left:60px;top:319px;width:80px;height:28px;background:#fcf8f0;padding-top:1px;line-height:28px"><em>NVIDIA CPU</em></div><div class="c " style="left:140px;top:319px;width:65px;height:28px;background:#fcf8f0;padding-top:1px;line-height:28px"><em>B</em><i>0011</i></div><div class="c " style="left:205px;top:319px;width:65px;height:28px;background:#fcf8f0;padding-top:1px;line-height:28px">零件</div><div class="c " style="left:270px;top:319px;width:68px;height:28px;background:#fcf8f0;padding-top:1px;line-height:28px"><em>smCPU</em></div><div class="c " style="left:338px;top:319px;width:83px;height:28px;background:#fcf8f0;padding-top:1px;line-height:28px"><i>1705</i></div><div class="c " style="left:421px;top:319px;width:49px;height:28px;background:#fcf8f0;padding-top:1px;line-height:28px">片</div><div class="c n" style="left:470px;top:319px;width:78px;height:28px;background:#fcf8f0;padding-top:1px;line-height:28px"><i>130</i></div><div class="c n" style="left:548px;top:319px;width:79px;height:28px;background:#fcf8f0;padding-top:1px;line-height:28px"><i>40</i></div><div class="c n" style="left:627px;top:319px;width:78px;height:28px;background:#fcf8f0;padding-top:1px;line-height:28px"><i>170</i></div><div class="c " style="left:705px;top:319px;width:207px;height:28px;background:#fcf8f0;border-right:none"></div></div>
<div class="abs" style="left:1181.500px;top:254px;width:8.500px;height:340px;background:#fcf8f1;border-left:1px solid #dbe3ef;border-right:1px solid #d3deee"></div>
<div class="abs" style="left:1182px;top:254px;width:7.500px;height:52.500px;background:#c6d6ec"></div>
<div class="abs" style="left:1183.200px;top:254.500px;width:5.800px;height:192.300px;border-radius:3px;background:#c3c0bc"></div>
<div class="abs" style="left:270px;top:593.500px;width:920px;height:36px;border:1px solid #d3deee;background:#fdf9f1"></div>
<div class="pg" style="left:1019.3px;width:26.2px"></div>
<div class="abs" style="left:1019.3px;top:599.5px;width:26.2px;text-align:center;font-size:9.8px;line-height:25px;color:#3d4653">1</div>
<div class="abs" style="left:1048.5px;top:599.5px;font-size:9.8px;line-height:25px;color:#3d4653;white-space:nowrap">/ 1</div>
<div class="pg" style="left:1070.4px;width:24.8px"></div>
<div class="pg" style="left:1098.8px;width:49.7px"></div>
<div class="abs" style="left:1123px;top:600px;width:1px;height:24px;background:#d3deee"></div>
<div class="pg" style="left:1152px;width:24.8px"></div>
<svg class="abs" style="left:1079px;top:607px" width="9" height="10" viewBox="0 0 9 10"><path d="M1.800 1.300v7.200M7.300 1.500L2.700 4.900l4.600 3.500" stroke="#4f5865" stroke-width="1.150" fill="none"/></svg>
<svg class="abs" style="left:1107px;top:607px" width="8" height="10" viewBox="0 0 8 10"><path d="M6.300 1.200L2.100 4.800l4.200 3.600" stroke="#4f5865" stroke-width="1.150" fill="none"/></svg>
<svg class="abs" style="left:1132px;top:607px" width="8" height="10" viewBox="0 0 8 10"><path d="M1.500 1.200l4.200 3.600-4.200 3.600" stroke="#4f5865" stroke-width="1.150" fill="none"/></svg>
<svg class="abs" style="left:1160px;top:607px" width="9" height="10" viewBox="0 0 9 10"><path d="M7.200 1.300v7.200M1.700 1.500l4.600 3.400-4.600 3.500" stroke="#4f5865" stroke-width="1.150" fill="none"/></svg>
</div>
</body>
</html>
